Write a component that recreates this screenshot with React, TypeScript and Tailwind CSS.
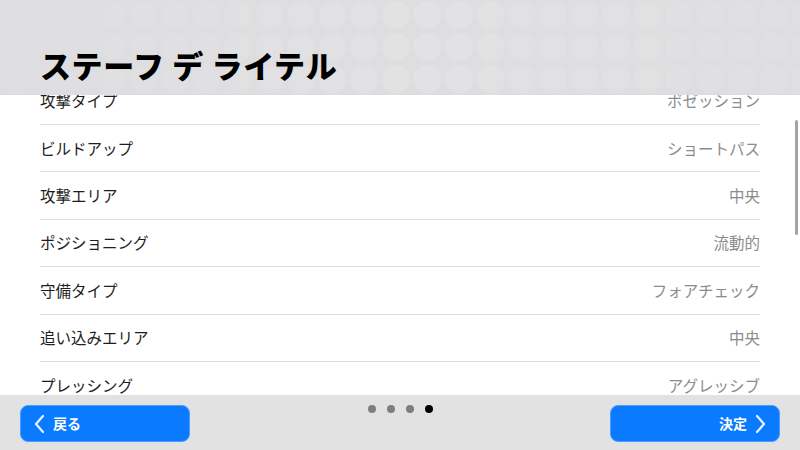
import React from 'react';

const rows: { label: string; value: string }[] = [
  { label: '攻撃タイプ', value: 'ポゼッション' },
  { label: 'ビルドアップ', value: 'ショートパス' },
  { label: '攻撃エリア', value: '中央' },
  { label: 'ポジショニング', value: '流動的' },
  { label: '守備タイプ', value: 'フォアチェック' },
  { label: '追い込みエリア', value: '中央' },
  { label: 'プレッシング', value: 'アグレッシブ' },
  { label: 'ディフェンシブ戦術', value: 'バランス' },
];

// faint circle texture behind the title
const HeaderPattern = () => (
  <svg className="absolute inset-0" width="800" height="95" xmlns="http://www.w3.org/2000/svg">
    <defs>
      <pattern id="dots" x="2" y="0" width="31.5" height="32" patternUnits="userSpaceOnUse">
        <circle cx="15.75" cy="15" r="14" fill="#ffffff" fillOpacity="0.13" />
      </pattern>
      <linearGradient id="fade" x1="0" x2="1" y1="0" y2="0">
        <stop offset="0" stopColor="#fff" stopOpacity="0.3" />
        <stop offset="0.55" stopColor="#fff" stopOpacity="1" />
        <stop offset="1" stopColor="#fff" stopOpacity="0.5" />
      </linearGradient>
      <mask id="fadeMask">
        <rect width="800" height="95" fill="url(#fade)" />
      </mask>
    </defs>
    <rect width="800" height="95" fill="url(#dots)" mask="url(#fadeMask)" />
  </svg>
);

const Chevron = ({ dir }: { dir: 'left' | 'right' }) => (
  <svg width="12" height="20" viewBox="0 0 12 20" fill="none" xmlns="http://www.w3.org/2000/svg">
    <polyline
      points={dir === 'left' ? '10,2 3,10 10,18' : '2,2 9,10 2,18'}
      stroke="#e8f1ff"
      strokeWidth="2.2"
      strokeLinecap="round"
      strokeLinejoin="round"
    />
  </svg>
);

export default function App() {
  return (
    <div
      className="relative w-[800px] h-[450px] overflow-hidden bg-white"
      style={{ fontFamily: '"Noto Sans CJK JP", "Noto Sans", sans-serif' }}
    >
      {/* list, scrolled a little under the header */}
      <div className="pt-[77.6px] px-10">
        {rows.map((r) => (
          <div
            key={r.label}
            className="h-[47.4px] flex items-center justify-between border-b border-[#dedede] text-[15.5px]"
          >
            <span className="text-[#1e1e1e]">{r.label}</span>
            <span className="text-[#8c8c8c]">{r.value}</span>
          </div>
        ))}
      </div>

      {/* scrollbar */}
      <div className="absolute right-[2px] top-[120px] w-[3px] h-[115px] rounded-full bg-[#a3a3a3]" />

      {/* header */}
      <div className="absolute top-0 left-0 right-0 h-[95px] bg-[#dedee0]">
        <HeaderPattern />
        <h1 className="absolute left-10 top-[45px] text-[31px] leading-[40px] font-black text-black tracking-[0.6px]">
          ステーフ デ ライテル
        </h1>
      </div>

      {/* footer */}
      <div className="absolute bottom-0 left-0 right-0 h-[55px] bg-[#dfdfe1]/[0.92] px-5 pt-[10px] flex justify-between items-start">
        <button className="w-[170px] h-[37px] rounded-lg bg-[#0a7bff] border border-[#4b9dff] flex items-center gap-[8px] pl-[12px] text-white text-[14px] font-bold">
          <Chevron dir="left" />
          <span>戻る</span>
        </button>
        <div className="flex items-center gap-[11px]">
          <span className="w-[8px] h-[8px] rounded-full bg-[#7e7e7e]" />
          <span className="w-[8px] h-[8px] rounded-full bg-[#7e7e7e]" />
          <span className="w-[8px] h-[8px] rounded-full bg-[#7e7e7e]" />
          <span className="w-[8px] h-[8px] rounded-full bg-black" />
        </div>
        <button className="w-[170px] h-[37px] rounded-lg bg-[#0a7bff] border border-[#4b9dff] flex items-center justify-end gap-[8px] pr-[12px] text-white text-[14px] font-bold">
          <span>決定</span>
          <Chevron dir="right" />
        </button>
      </div>
    </div>
  );
}
